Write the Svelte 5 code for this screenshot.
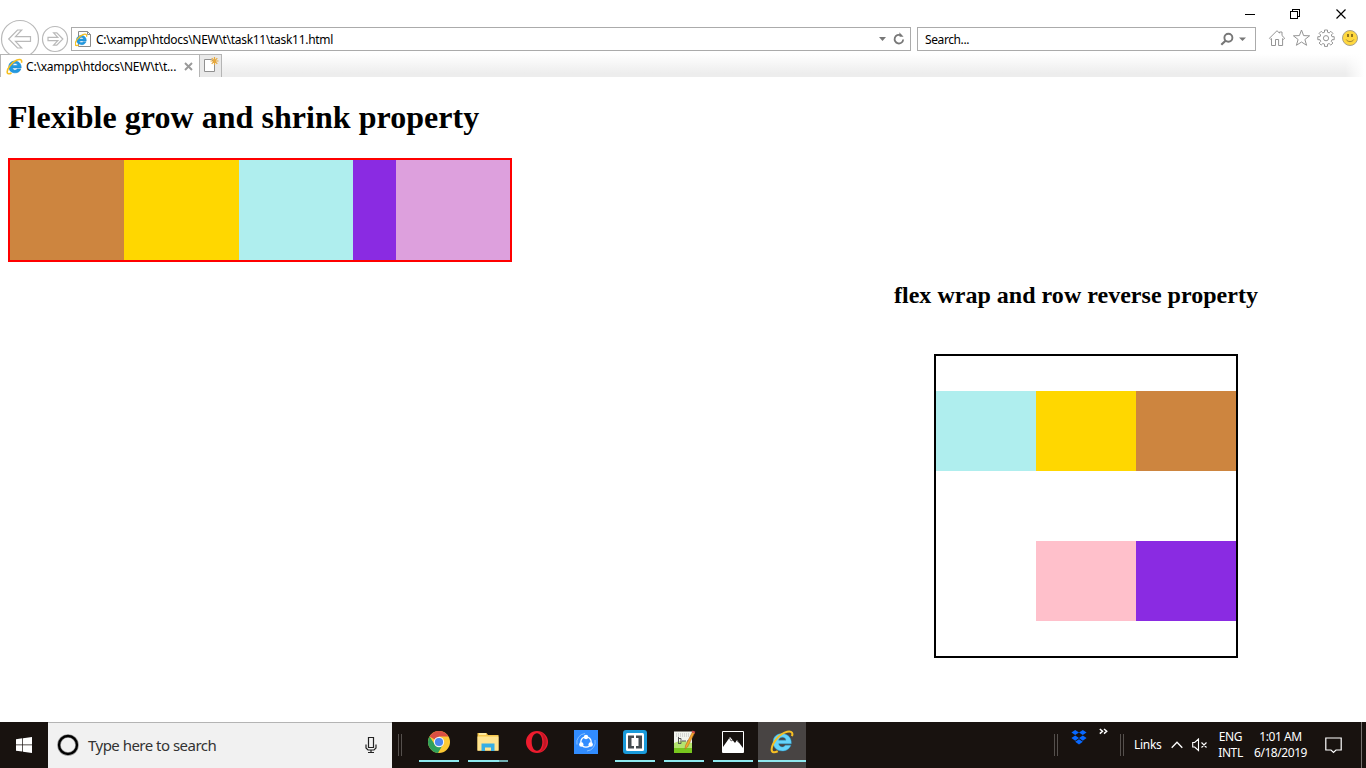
<script>
  const growItems = [
    { color: 'peru', grow: 8 },
    { color: 'gold', grow: 8 },
    { color: 'paleturquoise', grow: 8 },
    { color: 'blueviolet', grow: 3 },
    { color: 'plum', grow: 8 }
  ];
  const wrapItems = ['peru', 'gold', 'paleturquoise', 'blueviolet', 'pink'];
  const apps = [
    { id: 'chrome', running: true },
    { id: 'explorer', running: true, stacked: true },
    { id: 'opera' },
    { id: 'share' },
    { id: 'brackets', running: true },
    { id: 'notepad', running: true },
    { id: 'photos', running: true },
    { id: 'ie', running: true, active: true }
  ];
</script>

{#snippet ieGlyph()}
  <path fill-rule="evenodd" d="M14.300 9.400H6.200c.2 2.300 3.300 2.700 4.200.9h3.600C12.300 15.800 2.600 15.100 2.600 8.400c0-7.600 12.200-7.400 11.700 1zM6.200 7.100h4.700c-.2-2.500-4.400-2.500-4.700 0z" fill="#2299e0" stroke="#1684cc" stroke-width=".5" />
  <path d="M14.500 4.500C15.500 1.500 13.300.5 9.800 2.200 5.200 4.400 1 10.100 1.100 13.300c.1 2 2.100 1.900 4.100.8" fill="none" stroke="#f5bf21" stroke-width="1.500" />
{/snippet}

<div class="screen">
  <div class="titlebar">
    <svg width="116" height="27" viewBox="0 0 116 27" fill="none" stroke="#000" shape-rendering="crispEdges">
      <path d="M5 14.500h10" />
      <path d="M50.500 11.500h7v7h-7zM52.500 11.500v-2h7v7h-2" />
      <path d="M96.500 9.500l9 9M105.500 9.500l-9 9" shape-rendering="auto" stroke-width="1.200" />
    </svg>
  </div>

  <div class="navbar">
    <svg class="nav-buttons" width="71" height="40" viewBox="0 0 71 40" fill="none" stroke="#b9b9b9" stroke-width="1.200">
      <circle cx="20" cy="20" r="18.500" />
      <path d="M8.700 20l8.800-9h4.200l-6.200 6.700h15v4.600h-15l6.200 6.700h-4.200z" />
      <circle cx="55" cy="20" r="12.500" />
      <path d="M62.800 20l-6-6.200h-3.200l4.200 4.500H48v3.400h9.800l-4.200 4.500h3.200z" />
    </svg>
    <div class="field address">
      <svg width="17" height="17" viewBox="0 0 17 17">
        <path d="M3.500.5h9l3 3v12h-12z" fill="#fff" stroke="#8b8b8b" />
        <path d="M12.500.5v3h3" fill="none" stroke="#8b8b8b" />
        <g transform="translate(-.7 2) scale(.84)">{@render ieGlyph()}</g>
      </svg>
      <span class="url">C:\xampp\htdocs\NEW\t\task11\task11.html</span>
      <svg class="end" width="30" height="16" viewBox="0 0 30 16">
        <path d="M2 6h7l-3.500 4z" fill="#777" />
        <path d="M26.200 8.500a4.300 4.300 0 1 1-2.400-4.200" fill="none" stroke="#777" stroke-width="1.800" />
        <path d="M22.300 1.200l.3 4.600h4z" fill="#777" />
      </svg>
    </div>
    <div class="field find">
      <span class="hint">Search...</span>
      <svg class="end" width="28" height="16" viewBox="0 0 28 16">
        <circle cx="8.400" cy="6.800" r="4" fill="none" stroke="#777" stroke-width="1.900" />
        <path d="M5.500 9.800L1.300 13.800" stroke="#777" stroke-width="2.200" />
        <path d="M19 6.500h7L22.500 10z" fill="#777" />
      </svg>
    </div>
    <svg class="tools" width="94" height="20" viewBox="0 0 94 20" fill="none" stroke="#949494">
      <path d="M1.500 10.200L9 2.700l2.500 2.500V4h2.500v3.600l2.700 2.600-1.200 1.200-.9-.8V17.500h-4V11.500H7.500v6h-4v-6.900l-.8.800z" />
      <path d="M33.500 2l2.100 5.600 6 .2-4.700 3.700 1.700 5.800-5.100-3.300-5.100 3.300 1.700-5.800-4.700-3.700 6-.2z" />
      <path d="M56.500 2h3v2.200l1.700.7 1.600-1.600 2.100 2.100-1.600 1.600.7 1.700h2.200v3H64l-.7 1.700 1.600 1.600-2.100 2.100-1.600-1.600-1.700.7v2.200h-3v-2.200l-1.700-.7-1.600 1.600-2.100-2.100 1.600-1.600-.7-1.700h-2.200v-3H52l.7-1.700-1.600-1.600 2.100-2.100 1.600 1.600 1.700-.7z" />
      <circle cx="58" cy="10.200" r="2.600" />
      <circle cx="82" cy="10" r="7.500" fill="#ffd83f" stroke="#a9a18a" />
      <path d="M80 6v3M84 6v3" stroke="#765c18" stroke-width="1.600" />
      <path d="M78.200 11.500c1.500 2.800 6.100 2.800 7.600 0" stroke="#a08335" />
    </svg>
  </div>

  <div class="tabs">
    <div class="tab">
      <svg width="17" height="17" viewBox="0 0 16 16">{@render ieGlyph()}</svg>
      <span class="tab-title">C:\xampp\htdocs\NEW\t\t...</span>
      <svg class="close" width="9" height="9" viewBox="0 0 9 9"><path d="M1 1l7 7M8 1L1 8" stroke="#999" stroke-width="1.900" /></svg>
    </div>
    <div class="newtab">
      <svg width="18" height="18" viewBox="0 0 18 18">
        <path d="M2.500 3.500h7l3 3v9h-10z" fill="#fff" stroke="#909090" />
        <path d="M12.500 1v8M8.500 5h8M9.700 2.200l5.600 5.600M15.300 2.200L9.700 7.800" stroke="#e6a83c" stroke-width="1.200" />
      </svg>
    </div>
  </div>

  <main>
    <h1>Flexible grow and shrink property</h1>
    <div class="grow">
      {#each growItems as item}
        <div style="background:{item.color};flex-grow:{item.grow}"></div>
      {/each}
    </div>
    <section>
      <h2>flex wrap and row reverse property</h2>
      <div class="wrap">
        {#each wrapItems as color}
          <div style="background:{color}"></div>
        {/each}
      </div>
    </section>
  </main>

  <footer>
    <div class="start">
      <svg width="16" height="16" viewBox="0 0 16 16" fill="#fff"><path d="M0 2.200l6.300-.9v6.200H0zM7 1.200L16 0v7.500H7zM0 8.300h6.300v6.300L0 13.700zM7 8.300h9V16l-9-1.300z" /></svg>
    </div>
    <div class="search">
      <svg width="22" height="22" viewBox="0 0 22 22"><circle cx="11" cy="11" r="9" fill="none" stroke="#9a9a9a" stroke-width="3.600" /><circle cx="11" cy="11" r="9" fill="none" stroke="#000" stroke-width="2.300" /></svg>
      <span class="prompt">Type here to search</span>
      <svg class="mic" width="12" height="18" viewBox="0 0 12 18" fill="none" stroke="#222" stroke-width="1.200"><path d="M3.500 1.500h5v10h-5zM1 8.500v3.500l2 2h6l2-2V8.500M6 14v2.500M3 16.500h6" /></svg>
    </div>
    <div class="grip first"></div>
    <div class="apps">
      {#each apps as app}
        <div class={['app', app.running && 'running', app.stacked && 'stacked', app.active && 'active']}>
          <svg width="24" height="24" viewBox="0 0 24 24">
            {#if app.id === 'chrome'}
              <circle cx="12" cy="12" r="11" fill="#fcc934" />
              <path d="M12 12L2.500 6.500A11 11 0 0 1 21.500 6.500H12z" fill="#d94f43" />
              <path d="M2.500 6.500A11 11 0 0 0 11 23l5-8.500L12 12 7.500 14z" fill="#2ea05a" />
              <circle cx="12" cy="12" r="5.200" fill="#f4f4f4" />
              <circle cx="12" cy="12" r="4.100" fill="#4a87ee" />
            {:else if app.id === 'explorer'}
              <path d="M1.500 3h9l1.500 2h10.500v15.500h-21z" fill="#f6c74d" />
              <path d="M3 4h7" stroke="#fff4b8" stroke-width="1.500" />
              <path d="M1.500 6.500h21v14.200h-21z" fill="#ffe490" />
              <path d="M5.500 13.500h13V21H15v-3.500H9V21H5.500z" fill="#36aee4" />
            {:else if app.id === 'opera'}
              <path fill-rule="evenodd" d="M12 1a11 11 0 1 0 0 22 11 11 0 0 0 0-22zm0 2.300c3.200 0 5.300 3.900 5.300 8.700s-2.100 8.700-5.300 8.700S6.700 16.800 6.700 12 8.800 3.300 12 3.300z" fill="#ed1c2e" />
              <path d="M14 1.500a11 11 0 0 1 0 21c3-2 4.700-6 4.700-10.500S17 3.500 14 1.500z" fill="#c01626" />
            {:else if app.id === 'share'}
              <path d="M0 0h24v24H0z" fill="#318cff" />
              <circle cx="12" cy="12" r="5.200" fill="none" stroke="#fff" stroke-width="1.300" />
              <g fill="#fff"><circle cx="12" cy="7" r="2.200" /><circle cx="7.300" cy="14.500" r="2.200" /><circle cx="16.700" cy="14.500" r="2.200" /></g>
              <path d="M3 14.500A9 9 0 0 1 11 3.500M13 21a9 9 0 0 0 8-11" fill="none" stroke="#9bcaff" stroke-width=".8" />
            {:else if app.id === 'brackets'}
              <rect width="24" height="24" rx="3" fill="#199ada" />
              <rect x="3" y="3" width="18" height="18" rx="1.500" fill="#fff" />
              <path d="M5 5.500h6V8H8.500v8H11v2.500H5zM13 5.500h6v13h-6V16h2.500V8H13z" fill="#444b50" />
            {:else if app.id === 'notepad'}
              <path d="M2 1.500h18V23H2z" fill="#f2f4ee" />
              <path d="M2 13h18v10H2z" fill="#78c61e" />
              <path d="M2 13q8-4 18 0v5H2z" fill="#b5e46f" />
              <path d="M4 4h14M4 6h13" stroke="#aaa" stroke-width=".8" stroke-dasharray="1" />
              <path d="M6.500 7v7M7 8.500h2v5H7M10 11h4M15 11h2.500" stroke="#555" fill="none" />
              <path d="M20.500 2l2 1-7 14-2.500 2 .5-3.500z" fill="#f1a72a" stroke="#b6682a" stroke-width=".6" />
              <path d="M20.500.5l2.800 1.300-.8 1.800-2.800-1.300z" fill="#d34c4c" />
            {:else if app.id === 'photos'}
              <path d="M1.500 1.500h21v21h-21z" fill="#16110f" stroke="#fff" />
              <path d="M2 17l7-10 5 6 2-3 6 8v4H2z" fill="#fff" />
              <path d="M8.500 8l1.500 3 2-1M16 10.500l1.500 2" stroke="#16110f" stroke-width=".6" fill="none" />
            {:else}
              <g transform="translate(-1 -.9) scale(1.560)">
                <path fill-rule="evenodd" d="M14.300 9.400H6.200c.2 2.300 3.300 2.700 4.200.9h3.600C12.300 15.800 2.600 15.100 2.600 8.400c0-7.600 12.200-7.400 11.700 1zM6.200 7.100h4.700c-.2-2.500-4.400-2.500-4.700 0z" fill="#65d4fa" stroke="#279ed2" stroke-width=".3" />
                <path d="M14.700 4.500C15.800 1.700 13.600.8 10 2.300 5.200 4.400 1.600 10.100 1.700 13.300c.1 2 2.100 1.800 3.900.9" fill="none" stroke="#f6bf24" stroke-width="1.300" />
              </g>
            {/if}
          </svg>
        </div>
      {/each}
    </div>
    <div class="tray">
      <div class="grip"></div>
      <svg class="dropbox" width="16" height="15" viewBox="0 0 16 15" fill="#0868ff"><path d="M4.200 0l3.800 2.500-3.800 2.600L.4 2.500zM11.800 0l3.800 2.500-3.800 2.600L8 2.500zM4.200 5.600L8 8.100l-3.800 2.600L.4 8.100zM11.800 5.600l3.800 2.500-3.800 2.600L8 8.100zM8 9.300l3.800 2.500L8 14.400l-3.800-2.600z" /></svg>
      <svg class="more" width="9" height="7" viewBox="0 0 9 7" fill="none" stroke="#fff" stroke-width="1.500"><path d="M.8 1l2.700 2.300L.8 5.600M5 1l2.700 2.300L5 5.600" /></svg>
      <div class="grip second"></div>
      <span class="links">Links</span>
      <svg class="chevron" width="12" height="8" viewBox="0 0 12 8" fill="none" stroke="#fff" stroke-width="1.300"><path d="M.7 6.800L6 1.300l5.300 5.500" /></svg>
      <svg class="sound" width="16" height="14" viewBox="0 0 16 14" fill="none" stroke="#fff" stroke-width="1.100"><path d="M.7 4.500h2L6.500 1v11.500L2.700 9h-2zM9.500 4.500l5 5M14.500 4.500l-5 5" /></svg>
      <div class="pair lang"><span>ENG</span><span>INTL</span></div>
      <div class="pair clock"><span>1:01 AM</span><span>6/18/2019</span></div>
      <svg class="notice" width="17" height="17" viewBox="0 0 17 17" fill="none" stroke="#fff" stroke-width="1.200"><path d="M.8 1h15.400v12H11l-2.500 2.500L6 13H.8z" /></svg>
      <div class="desktop"></div>
    </div>
  </footer>
</div>

<style>
  :global(body) { margin: 0; }
  svg { display: block; flex: none; }
  .screen { width: 1366px; height: 768px; display: flex; flex-direction: column; overflow: hidden; background: #fff; font: 12px "Noto Sans", sans-serif; color: #000; }
  span { white-space: nowrap; }
  .titlebar { height: 27px; display: flex; justify-content: flex-end; padding-right: 10px; }
  .navbar { height: 27px; display: flex; align-items: flex-start; }
  .nav-buttons { margin-top: -8px; }
  .field { height: 24px; box-sizing: border-box; border: 1px solid #ababab; display: flex; align-items: center; background: #fff; }
  .address { width: 840px; padding: 0 3px; }
  .url { margin-left: 4px; letter-spacing: -.3px; }
  .end { margin-left: auto; }
  .find { width: 339px; margin-left: 6px; padding: 0 7px; }
  .hint { letter-spacing: -.4px; }
  .tools { margin: 1px 0 0 12px; }
  .tabs { height: 23px; display: flex; background: linear-gradient(90deg, transparent 1345px, #fff 1364px), linear-gradient(#fff, #ededed 85%); }
  .tab { box-sizing: border-box; width: 199px; height: 23px; background: #fff; border: 1px solid #b5b5b5; border-width: 1px 0 0 1px; display: flex; align-items: center; padding: 0 6px 0 5px; }
  .tab-title { margin-left: 3px; letter-spacing: -.2px; }
  .close { margin-left: auto; }
  .newtab { box-sizing: border-box; width: 23px; border: 1px solid #b5b5b5; border-bottom: 0; background: #e9e9e9; padding: 1px 0 0 2px; }
  main { height: 645px; box-sizing: border-box; padding: 22px 8px 0; font-family: "Liberation Serif", serif; }
  h1 { font-size: 32px; line-height: 36px; margin: 0 0 23px; letter-spacing: .04px; }
  .grow { width: 500px; height: 100px; border: 2px solid red; display: flex; }
  .grow div { flex-basis: 0; }
  section { width: 364px; margin: 19px 100px 0 auto; }
  h2 { font-size: 24px; line-height: 28px; margin: 0; white-space: nowrap; letter-spacing: .02px; }
  .wrap { width: 300px; height: 300px; margin: 45px 0 0 40px; border: 2px solid #000; display: flex; flex-flow: row-reverse wrap; align-content: space-around; }
  .wrap div { width: 100px; height: 80px; }
  footer { height: 46px; display: flex; background: #18120f; color: #fff; }
  .start { width: 48px; display: flex; align-items: center; justify-content: center; }
  .search { box-sizing: border-box; width: 344px; background: #f1f1f1; border-top: 1px solid #b4b4b4; display: flex; align-items: center; padding: 0 15px 2px 9px; color: #333; }
  .prompt { font-size: 15px; margin-left: 9px; letter-spacing: -.52px; }
  .mic { margin-left: auto; }
  .grip { width: 2px; height: 22px; border: 1px solid #55504d; border-width: 0 1px; margin-top: 12px; }
  .first { margin-left: 6px; }
  .apps { display: flex; gap: 1px; margin-left: 13px; }
  .app { width: 48px; height: 46px; display: flex; flex-direction: column; align-items: center; box-sizing: border-box; padding-top: 8px; }
  .running::after { content: ""; width: 40px; height: 2px; background: #8ee8ee; margin-top: 6px; }
  .stacked::after { background: linear-gradient(90deg, #8ee8ee 31px, #70adb0 31px); }
  .active { background: #484443; }
  .active::after { width: 48px; }
  .tray { display: flex; margin-left: auto; width: 312px; }
  .dropbox { margin: 8px 0 0 13px; }
  .more { margin: 6px 0 0 12px; }
  .second { margin-left: 12px; }
  .links { margin: 15px 0 0 10px; line-height: 16px; width: 28px; letter-spacing: -.3px; }
  .chevron { margin: 19px 0 0 9px; }
  .sound { margin: 16px 0 0 9px; }
  .pair { display: flex; flex-direction: column; align-items: center; padding-top: 7px; line-height: 16px; }
  .lang { width: 25px; margin-left: 10px; letter-spacing: -.4px; }
  .clock { width: 53px; margin-left: 11px; letter-spacing: -.45px; }
  .notice { margin: 15px 0 0 18px; }
  .desktop { width: 1px; background: #76716f; margin: 0 4px 0 auto; }
</style>
